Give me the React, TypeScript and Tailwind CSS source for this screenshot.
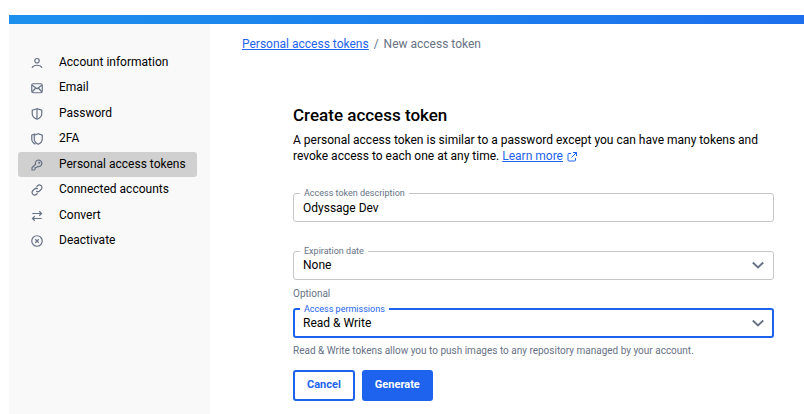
import type { ReactNode, SelectHTMLAttributes } from "react";

const icons: Record<string, ReactNode> = {
  user: (
    <>
      <circle cx="12" cy="7.500" r="4.500" />
      <path d="M2 21.500c2-4 5.500-5 10-5s8 1 10 5" />
    </>
  ),
  mail: (
    <>
      <rect x="1.500" y="3.500" width="21" height="18" rx="3" />
      <path d="M2.500 6.500 12 13.500l9.500-7M2.500 19.500l6.500-7M21.500 19.500l-6.500-7" />
    </>
  ),
  shield: (
    <>
      <path d="M12 1.500 2.500 4.500V12c0 5 4.500 8.500 9.500 10.500 5-2 9.500-5.500 9.500-10.500V4.500Z" />
      <path d="M12 2v20" />
    </>
  ),
  shields: (
    <>
      <path d="M14.500 1.500 6.500 4.500V12c0 5 3.500 8.500 8 10.500 4.500-2 8-5.500 8-10.500V4.500Z" />
      <path d="M8.500 1.500 1.500 4.500V12c0 5 3.500 8.500 7.500 10.500" />
    </>
  ),
  key: (
    <>
      <path d="M9 10.500a6.500 6.500 0 1 1 4.500 4.500L11 17H8.500v2.500L6.500 22H2v-4.500Z" />
      <circle cx="16.500" cy="7.500" r="1" />
    </>
  ),
  link: (
    <>
      <path d="m11 5.500 2-2a4.800 4.800 0 0 1 7.500 7l-3.500 3.500a4.800 4.800 0 0 1-6.500 0" />
      <path d="m13 18.500-2 2a4.800 4.800 0 0 1-7.500-7L7 10a4.800 4.800 0 0 1 6.500 0" />
    </>
  ),
  swap: <path d="M2.500 7h19M16.500 2.500 21 7l-4.500 4.500M21.500 17h-19M7.500 12.500 3 17l4.500 4.500" />,
  cancel: (
    <>
      <circle cx="12" cy="12" r="10.500" />
      <path d="m8.500 8.500 7 7m0-7-7 7" />
    </>
  ),
};

const menu = [
  { icon: "user", label: "Account information" },
  { icon: "mail", label: "Email" },
  { icon: "shield", label: "Password" },
  { icon: "shields", label: "2FA" },
  { icon: "key", label: "Personal access tokens", active: true },
  { icon: "link", label: "Connected accounts" },
  { icon: "swap", label: "Convert" },
  { icon: "cancel", label: "Deactivate" },
];

function Field({
  id,
  label,
  focused = false,
  children,
}: {
  id: string;
  label: string;
  focused?: boolean;
  children: ReactNode;
}) {
  return (
    <fieldset
      className={`min-w-0 rounded-[3px] ${
        focused ? "border-2 border-[#1d63ed] px-[5px]" : "border border-[#c4c6c9] px-[6px]"
      }`}
    >
      <legend
        className={`px-[4px] text-[9px] leading-[12px] ${focused ? "text-[#1d63ed]" : "text-[#677285]"}`}
      >
        <label htmlFor={id}>{label}</label>
      </legend>
      <div className={`flex items-start ${focused ? "h-[21px]" : "h-[22px]"}`}>{children}</div>
    </fieldset>
  );
}

function Select({ children, ...props }: SelectHTMLAttributes<HTMLSelectElement>) {
  return (
    <div className="grid w-full grid-cols-[1fr_auto] items-center">
      <select
        {...props}
        className="col-span-2 col-start-1 row-start-1 h-[16px] w-full appearance-none bg-transparent px-[3px] text-[12px] leading-[16px] text-black outline-none"
      >
        {children}
      </select>
      <svg
        className="pointer-events-none col-start-2 row-start-1 mr-[3px] h-[12px] w-[12px]"
        viewBox="0 0 12 12"
        fill="none"
        stroke="#677285"
        strokeWidth="1.900"
        aria-hidden="true"
      >
        <path d="m.8 3.500 5.200 5 5.200-5" />
      </svg>
    </div>
  );
}

export default function App() {
  return (
    <div className="flex min-h-screen flex-col bg-white pt-[15px] pl-[9px] font-['Roboto','Liberation_Sans',sans-serif] text-[12px] text-black">
      <header className="h-[9px] bg-linear-to-r from-[#1d90ed] to-[#1d6fed]" />
      <div className="flex flex-1">
        <nav className="w-[201px] shrink-0 bg-[#f9f9fa] px-[9px] pt-[26px]">
          <ul className="flex h-[204px] flex-col justify-between">
            {menu.map((item) => (
              <li key={item.label}>
                <a
                  href="#"
                  aria-current={item.active ? "page" : undefined}
                  className={`flex h-[25px] w-[179px] items-center gap-[16px] rounded-[3px] pl-[13px] ${
                    item.active ? "bg-[#d0d0d0]" : ""
                  }`}
                >
                  <svg
                    className="h-[12px] w-[12px] shrink-0"
                    viewBox="0 0 24 24"
                    fill="none"
                    stroke="#677285"
                    strokeWidth="2.400"
                    aria-hidden="true"
                  >
                    {icons[item.icon]}
                  </svg>
                  <span className="pb-[2px] leading-[16px] whitespace-nowrap">{item.label}</span>
                </a>
              </li>
            ))}
          </ul>
        </nav>
        <main className="min-w-0 flex-1 pt-[12px] pr-[30px] pl-[32px]">
          <nav aria-label="Breadcrumb" className="flex gap-[5px] leading-[16px] text-[#677285]">
            <a href="#" className="text-[#1d63ed] underline">
              Personal access tokens
            </a>
            <span>/</span>
            <span>New access token</span>
          </nav>
          <form className="pt-[51px] pl-[51px]" onSubmit={(e) => e.preventDefault()}>
            <h1 className="text-[17px] leading-[24px] font-medium">Create access token</h1>
            <p className="pt-[5px] leading-[16px]">
              A personal access token is similar to a password except you can have many tokens and revoke access to
              each one at any time.{" "}
              <a href="#" className="text-[#1d63ed] underline">
                Learn more
              </a>
              <svg
                className="ml-[4px] inline h-[10px] w-[10px]"
                viewBox="0 0 20 20"
                fill="none"
                stroke="#1d63ed"
                strokeWidth="2"
                aria-hidden="true"
              >
                <path d="M8 3H4a2 2 0 0 0-2 2v11a2 2 0 0 0 2 2h11a2 2 0 0 0 2-2v-4M12 1h7v7M19 1 9 11" />
              </svg>
            </p>
            <div className="pt-[23px]">
              <Field id="description" label="Access token description">
                <input
                  id="description"
                  type="text"
                  defaultValue="Odyssage Dev"
                  className="h-[18px] w-full bg-transparent px-[3px] text-[12px] leading-[18px] outline-none"
                />
              </Field>
            </div>
            <div className="pt-[23px]">
              <Field id="expiration" label="Expiration date">
                <Select id="expiration" defaultValue="None">
                  <option>None</option>
                </Select>
              </Field>
            </div>
            <p className="pt-[7px] text-[10px] leading-[14px] text-[#677285]">Optional</p>
            <div className="pt-[2px]">
              <Field id="permissions" label="Access permissions" focused>
                <Select id="permissions" defaultValue="Read & Write">
                  <option>Read &amp; Write</option>
                </Select>
              </Field>
            </div>
            <p className="pt-[6px] text-[10px] leading-[14px] text-[#677285]">
              Read &amp; Write tokens allow you to push images to any repository managed by your account.
            </p>
            <div className="flex gap-[7px] pt-[12px] pb-[12px] text-[11px] font-bold">
              <button type="button" className="h-[31px] rounded-[3px] border-2 border-[#1d63ed] px-[12px] text-[#1d63ed]">
                Cancel
              </button>
              <button type="submit" className="h-[31px] rounded-[3px] bg-[#1d63ed] px-[13px] text-white">
                Generate
              </button>
            </div>
          </form>
        </main>
      </div>
    </div>
  );
}
